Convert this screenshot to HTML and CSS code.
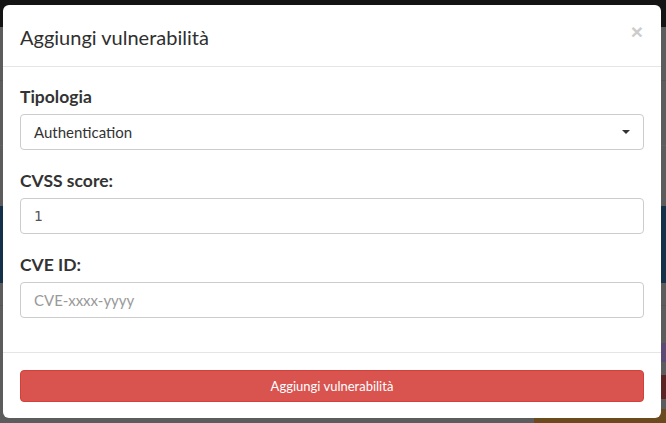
FILE: index.html
```html
<!DOCTYPE html>
<html lang="it">
<head>
<meta charset="utf-8">
<title>Aggiungi vulnerabilità</title>
<link rel="stylesheet" href="styles.css">
</head>
<body>
<div class="page">
  <div class="topbar"></div>
  <div class="band g1"></div>
  <div class="band g2"></div>
  <div class="band g3"></div>
  <div class="band blue"></div>
  <div class="band g4"></div>
  <div class="band g5"></div>
  <div class="band bottom"><span class="brown"></span></div>
</div>
<div class="side-purple"></div>
<div class="side-red"></div>

<div class="modal">
  <div class="modal-header">
    <h4 class="modal-title">Aggiungi vulnerabilità</h4>
    <button class="close" type="button">×</button>
  </div>
  <div class="modal-body">
    <div class="form-group">
      <label class="lbl">Tipologia</label>
      <div class="control select">
        <span>Authentication</span>
        <span class="caret"></span>
      </div>
    </div>
    <div class="form-group">
      <label class="lbl">CVSS score:</label>
      <div class="control"><span class="num">1</span></div>
    </div>
    <div class="form-group">
      <label class="lbl">CVE ID:</label>
      <div class="control"><span class="placeholder">CVE-xxxx-yyyy</span></div>
    </div>
  </div>
  <div class="modal-footer">
    <button class="btn-danger" type="button">Aggiungi vulnerabilità</button>
  </div>
</div>
</body>
</html>
```
FILE: styles.css
```css
* { box-sizing: border-box; }
html, body { margin: 0; padding: 0; }
body {
  width: 666px;
  height: 423px;
  overflow: hidden;
  font-family: Lato, "Open Sans", sans-serif;
  background: #5c5c5c;
  position: relative;
}
.page { display: flex; flex-direction: column; height: 423px; }
.topbar { height: 27px; background: #141414; }
.band { background: #5c5c5c; }
.g1 { height: 53px; }
.g2 { height: 65px; border-top: 1px solid #555; }
.g3 { height: 61px; border-top: 1px solid #626262; }
.blue { height: 77px; background: #15314a; }
.g4 { height: 22px; }
.g5 { height: 80px; border-top: 1px solid #555; }
.bottom { flex: 1; display: flex; align-items: flex-end; justify-content: flex-end; }
.brown { width: 132px; height: 14px; background: #6a4a1e; }
.side-purple { position: absolute; left: 661px; top: 343px; width: 5px; height: 19px; background: #5c4a74; }
.side-red { position: absolute; left: 661px; top: 375px; width: 5px; height: 24px; background: #5a2424; }

.modal {
  position: absolute;
  left: 3px;
  top: 5px;
  width: 658px;
  height: 413px;
  background: #fff;
  border-radius: 6px;
  display: flex;
  flex-direction: column;
}
.modal-header {
  height: 62px;
  border-bottom: 1px solid #e5e5e5;
  padding: 0 17px;
  display: flex;
  align-items: center;
  justify-content: space-between;
}
.modal-title {
  margin: 0;
  font-size: 20px;
  font-weight: normal;
  color: #2f2f2f;
  line-height: 26px;
  padding-top: 3px;
}
.close {
  border: 0;
  background: none;
  padding: 0;
  margin: 0 1px 9px 0;
  font-family: "Liberation Sans", Arial, sans-serif;
  font-size: 21px;
  font-weight: bold;
  line-height: 1;
  color: #cccccc;
}
.modal-body { padding: 18px 17px 15px; }
.form-group { margin-bottom: 19px; }
.lbl {
  display: block;
  font-size: 17.5px;
  font-weight: bold;
  line-height: 24px;
  margin-bottom: 5px;
  color: #333;
}
.control {
  height: 36px;
  border: 1px solid #cccccc;
  border-radius: 4px;
  padding: 0 13px;
  display: flex;
  align-items: center;
  font-size: 15px;
  color: #333;
}
.select { justify-content: space-between; }
.caret {
  width: 0;
  height: 0;
  border-left: 4px solid transparent;
  border-right: 4px solid transparent;
  border-top: 4px solid #333;
}
.num { font-family: "DejaVu Sans", sans-serif; font-size: 14px; color: #555; }
.placeholder { color: #999; font-size: 15px; }
.modal-footer {
  border-top: 1px solid #e5e5e5;
  padding: 17px 17px 16px;
}
.btn-danger {
  display: block;
  width: 100%;
  height: 32px;
  border: 1px solid #d43f3a;
  border-radius: 4px;
  background: #d9534f;
  color: #fff;
  font-family: Lato, sans-serif;
  font-size: 13px;
  padding: 0;
}
```
